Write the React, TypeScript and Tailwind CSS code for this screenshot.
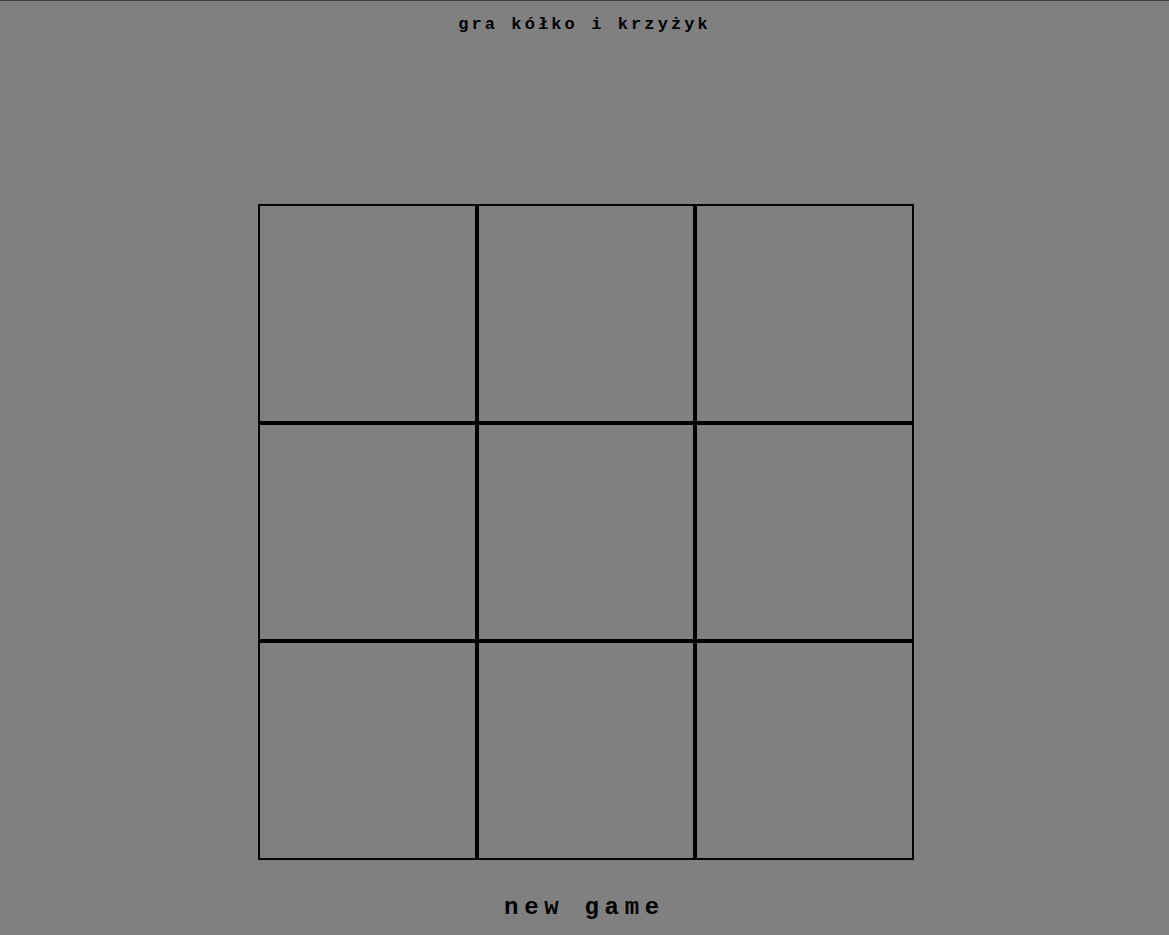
import React from "react";

export default function App() {
  const cells = Array.from({ length: 9 });
  return (
    <div className="h-[935px] w-full bg-[#808080] border-t border-[#3a3a3a] flex flex-col items-center overflow-hidden" style={{ fontFamily: '"Liberation Mono", "DejaVu Sans Mono", monospace' }}>
      <h1 className="mt-[12px] h-[24px] leading-[24px] text-[17px] font-bold tracking-[3.1px] text-black">gra kółko i krzyżyk</h1>
      <div className="mt-[167px] ml-[3px] w-[656px] h-[656px] grid grid-cols-3 grid-rows-3">
        {cells.map((_, i) => (
          <button key={i} className="border-2 border-black bg-transparent" />
        ))}
      </div>
      <button className="mt-[33px] h-[30px] leading-[30px] text-[24px] font-bold tracking-[5.7px] text-black">new game</button>
    </div>
  );
}
